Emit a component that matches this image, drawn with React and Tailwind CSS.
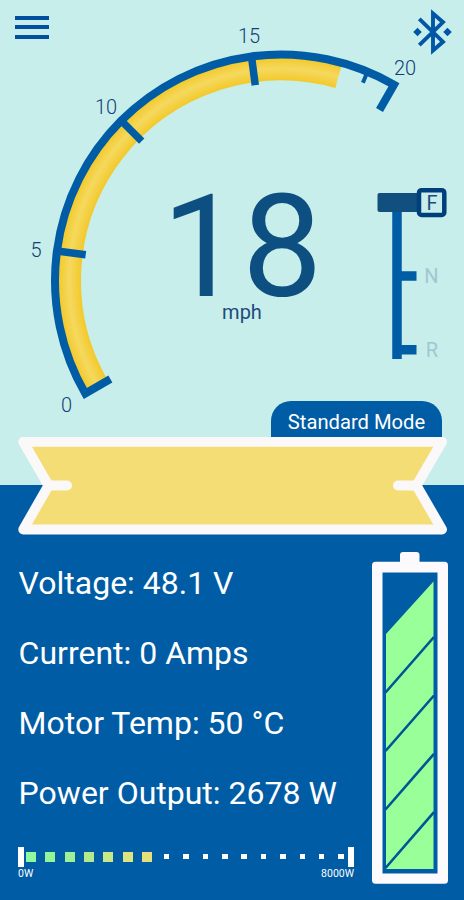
const SPEED = 18
const WATTS = 2678
const CELLS = ['#8ff9a0', '#94f598', '#9df096', '#b5ea8c', '#c8e787', '#dde581', '#e6e07c', ...Array(10).fill(null)]

const stats = [
  ['Voltage', '48.1 V'],
  ['Current', '0 Amps'],
  ['Motor Temp', '50 °C'],
  ['Power Output', `${WATTS} W`],
]

// gauge geometry: 0 mph sits at 150deg, 7.5deg per mph
const CX = 281
const CY = 280.5
const at = (mph, r) => {
  const a = ((150 + mph * 7.5) * Math.PI) / 180
  return `${(CX + r * Math.cos(a)).toFixed(2)} ${(CY + r * Math.sin(a)).toFixed(2)}`
}

const labels = [
  { n: 0, x: 66.5, y: 412 },
  { n: 5, x: 36, y: 256.5 },
  { n: 10, x: 106, y: 113.5 },
  { n: 15, x: 249, y: 43 },
  { n: 20, x: 405, y: 74.5 },
]

function Gauge() {
  return (
    <svg className="[grid-area:1/1] w-[464px] h-[430px]" viewBox="0 0 464 430">
      <defs>
        <radialGradient id="band" gradientUnits="userSpaceOnUse" cx={CX} cy={CY} r="223">
          <stop offset="0.895" stopColor="#f3c828"/>
          <stop offset="0.95" stopColor="#f5d95f"/>
          <stop offset="1" stopColor="#f3c828"/>
        </radialGradient>
      </defs>
      <path d={`M${at(0, 211.5)} A211.5 211.5 0 0 1 ${at(SPEED + 0.1, 211.5)}`} fill="none" stroke="url(#band)" strokeWidth="23"/>
      <g fill="none" stroke="#005ca4">
        <path d={`M${at(0, 197)} L${at(0, 226)} A226 226 0 0 1 ${at(20, 226)} L${at(20, 197)}`} strokeWidth="8"/>
        {[5, 10, 15].map(n => <path key={n} d={`M${at(n, 197)} L${at(n, 226)}`} strokeWidth="7.5"/>)}
        <path d={`M${at(19, 214)} L${at(19, 226)}`} strokeWidth="4"/>
      </g>
      <g className="text-[20px] font-light" fill="#123f75" textAnchor="middle">
        {labels.map(l => <text key={l.n} x={l.x} y={l.y}>{l.n}</text>)}
      </g>
    </svg>
  )
}

function Bluetooth() {
  return (
    <svg className="w-[40px] h-[46px]" viewBox="0 0 40 46" fill="none" stroke="#0057a8" strokeWidth="3.9">
      <path d="M7.3 9.8 L31 32.8 L21 41.5 V4.5 L31 13.2 L7.3 36.2"/>
      <path d="M5.5 18.7 l4.3 4.3 -4.3 4.3 -4.3 -4.3z M35.5 18.7 l4.3 4.3 -4.3 4.3 -4.3 -4.3z" fill="#0057a8" stroke="none"/>
    </svg>
  )
}

function Shifter() {
  return (
    <svg className="w-[72px] h-[184px]" viewBox="376 186 72 184">
      <path d="M397 210V359M397 276H416.5M397 349.7H416.5" stroke="#005ca4" strokeWidth="9.5" fill="none"/>
      <rect x="377.5" y="193" width="44" height="19" rx="2" fill="#104f7e"/>
      <rect x="419" y="190.2" width="25.3" height="24.8" rx="2.5" fill="#c7eeeb" stroke="#003f7c" strokeWidth="4.5"/>
      <g className="text-[20px]" textAnchor="middle">
        <text x="432" y="209.7" fill="#1f4a7c">F</text>
        <text x="431.5" y="283" fill="#a0c8d0">N</text>
        <text x="431.8" y="356.8" fill="#a0c8d0">R</text>
      </g>
    </svg>
  )
}

function Banner() {
  return (
    <svg className="w-[464px] h-[98px]" viewBox="0 437 464 98" stroke="#fbf8fa" strokeWidth="10" strokeLinejoin="round" strokeLinecap="round">
      <path d="M23.3 441.8 H442 L416.5 485.5 L442 529.5 H23.3 L48.5 485.5Z" fill="#f5dd75"/>
      <path d="M48.5 485.5H67M416.5 485.5H398" fill="none"/>
    </svg>
  )
}

function Battery() {
  return (
    <svg className="w-[76px] h-[332px] shrink-0" viewBox="371.5 551.5 76 332">
      <rect x="399.5" y="551.5" width="19.5" height="16" rx="3" fill="#fcfafc"/>
      <rect x="371.5" y="561.3" width="76" height="322" rx="3.5" fill="#fcfafc"/>
      <rect x="382" y="572" width="55" height="301" fill="#005ca4"/>
      <path d="M385.5 633.5 L433 581 V868.5 H385.5Z" fill="#99ff99"/>
      <path d="M385 692 L433.5 636.5 M385 750.5 L433.5 695 M385 809 L433.5 753.3 M385 867.5 L433.5 811.7" stroke="#005596" strokeWidth="2.6"/>
    </svg>
  )
}

function PowerMeter() {
  return (
    <div className="w-[336px]">
      <div className="flex justify-between items-center h-5">
        <i className="w-[5.5px] h-5 shrink-0 bg-white"/>
        <div className="flex -mx-[2.4px]">
          {CELLS.map((c, i) => (
            <span key={i} className="w-[19.4px] h-[10px] shrink-0 flex items-center justify-center">
              {c
                ? <i className="size-[10px]" style={{ background: c }}/>
                : <i className="size-[5.5px] bg-white"/>}
            </span>
          ))}
        </div>
        <i className="w-[5.5px] h-5 shrink-0 bg-white"/>
      </div>
      <div className="flex justify-between text-[10.5px] leading-[13px] text-white">
        <span>0W</span>
        <span>8000W</span>
      </div>
    </div>
  )
}

export default function App() {
  return (
    <div className="w-[464px] h-[900px] overflow-hidden font-['Roboto',sans-serif] bg-[linear-gradient(#c7eeeb_485.5px,#005ca4_485.5px)] flex flex-col">
      <div className="grid h-[401px] shrink-0">
        <Gauge/>
        <div className="[grid-area:1/1] flex flex-col">
          <header className="flex justify-between items-start pl-[15px] pr-[12px] pt-[9px] h-[186px]">
            <button className="flex flex-col gap-[5.6px] mt-[7px]">
              <i className="w-[34px] h-[3.8px] bg-[#00509f]"/>
              <i className="w-[34px] h-[3.8px] bg-[#00509f]"/>
              <i className="w-[34px] h-[3.8px] bg-[#00509f]"/>
            </button>
            <Bluetooth/>
          </header>
          <div className="flex justify-end pr-4">
            <div className="w-[268px] pt-[9px] text-center">
              <div className="text-[143px] leading-[104px] text-[#0d4f80]">{SPEED}</div>
              <div className="text-[20px] leading-[27px] text-[#1f4a7c]">mph</div>
            </div>
            <Shifter/>
          </div>
        </div>
      </div>

      <div className="flex justify-end pr-[22px] h-9 shrink-0">
        <div className="w-[171px] h-9 rounded-t-[20px] bg-[#005ca4] text-white text-[20.2px] leading-[42px] text-center">Standard Mode</div>
      </div>
      <Banner/>

      <div className="flex justify-between pl-[18px] pr-[16.5px] pt-[16.5px]">
        <div>
          <div className="h-[299px] pl-[0.6px] text-white text-[32px] leading-[70px] -mt-[4px]">
            {stats.map(([k, v]) => <p key={k} className="whitespace-nowrap">{k}: {v}</p>)}
          </div>
          <PowerMeter/>
        </div>
        <Battery/>
      </div>
    </div>
  )
}
